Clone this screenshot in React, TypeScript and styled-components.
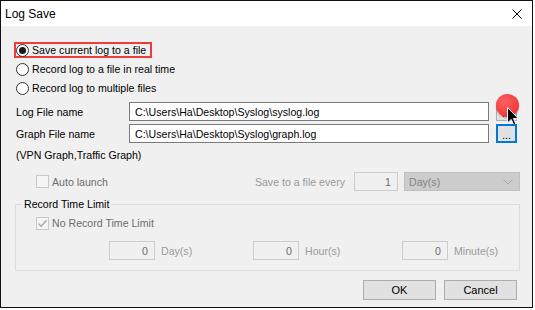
import styled, { createGlobalStyle } from 'styled-components'

const GlobalStyle = createGlobalStyle`
  body {
    margin: 0;
    background: #ffffff;
    font-family: "Liberation Sans", Arial, sans-serif;
  }
`

const Window = styled.div`
  width: 533px;
  height: 308px;
  box-sizing: border-box;
  border: 1px solid #111;
  display: flex;
  flex-direction: column;
  background: #f0f0f0;
`

const TitleBar = styled.div`
  height: 25px;
  background: #fff;
  display: flex;
  align-items: center;
  justify-content: space-between;
  padding: 0 10px 0 4px;
  font-size: 12px;
  color: #000;
`

const Body = styled.div`
  flex: 1;
  display: flex;
  flex-direction: column;
  padding: 16px 12px 6px 13px;
  font-size: 10.6px;
  color: #000;
`

const RadioList = styled.div`
  display: flex;
  flex-direction: column;
  align-items: flex-start;
  gap: 3px;
`

const RadioRow = styled.label<{ $highlight?: boolean }>`
  display: inline-flex;
  align-items: center;
  gap: 3px;
  height: 16px;
  box-sizing: border-box;
  padding-right: 4px;
  border: 2px solid ${p => (p.$highlight ? '#ee3b3b' : 'transparent')};
`

const RadioDot = styled.span<{ $checked?: boolean }>`
  width: 13px;
  height: 13px;
  box-sizing: border-box;
  border-radius: 50%;
  border: 1px solid #333;
  background: #fff;
  display: flex;
  align-items: center;
  justify-content: center;

  &::after {
    content: '';
    width: 7px;
    height: 7px;
    border-radius: 50%;
    background: ${p => (p.$checked ? '#1a1a1a' : 'transparent')};
  }
`

const FileRows = styled.div`
  margin-top: 6px;
  display: flex;
  flex-direction: column;
  gap: 3px;
  padding-left: 2px;
`

const FileRow = styled.div`
  display: flex;
  align-items: center;
  height: 19px;
`

const FieldLabel = styled.span`
  width: 113px;
  flex: none;
`

const TextBox = styled.div`
  width: 360px;
  height: 19px;
  box-sizing: border-box;
  border: 1px solid #7a7a7a;
  background: #fff;
  padding: 0 5px;
  display: flex;
  align-items: center;
  white-space: nowrap;
  overflow: hidden;
`

const BrowseWrap = styled.div`
  position: relative;
  width: 21px;
  height: 19px;
  margin-left: 7px;
`

const BrowseButton = styled.button<{ $focused?: boolean }>`
  width: 21px;
  height: 19px;
  box-sizing: border-box;
  padding: 0;
  font: inherit;
  font-size: 11px;
  line-height: 14px;
  background: #e1e1e1;
  border: 1px solid ${p => (p.$focused ? '#0078d7' : '#adadad')};
  box-shadow: ${p => (p.$focused ? 'inset 0 0 0 1px #0078d7' : 'none')};
  display: flex;
  align-items: flex-end;
  justify-content: center;
`

const Marker = styled.span`
  position: absolute;
  left: 0;
  top: -8px;
  width: 23px;
  height: 23px;
  border-radius: 50%;
  background: radial-gradient(circle at 40% 35%, #ff6262 0%, #f23d3d 60%, #e23232 100%);
  box-shadow: 0 1px 2px rgba(0, 0, 0, 0.25);
`

const Cursor = styled.svg`
  position: absolute;
  left: 11px;
  top: 5px;
  overflow: visible;
`

const Note = styled.div`
  margin-top: 4px;
  padding-left: 2px;
  line-height: 16px;
`

const OptionsRow = styled.div`
  margin-top: 9px;
  height: 19px;
  display: flex;
  align-items: center;
  justify-content: space-between;
`

const CheckRow = styled.label<{ $indent: number }>`
  display: inline-flex;
  align-items: center;
  gap: 3px;
  height: 16px;
  margin-left: ${p => p.$indent}px;
  color: #6d6d6d;
`

const CheckBox = styled.span`
  width: 13px;
  height: 13px;
  box-sizing: border-box;
  border: 1px solid #c8c8c8;
  background: #f5f5f5;
  display: flex;
  align-items: center;
  justify-content: center;
`

const EverySet = styled.div`
  display: flex;
  align-items: center;
`

const DimText = styled.span`
  color: #9a9a9a;
`

const NumBox = styled.div<{ $width: number }>`
  width: ${p => p.$width}px;
  height: 19px;
  box-sizing: border-box;
  border: 1px solid #cccccc;
  background: #f0f0f0;
  color: #6d6d6d;
  display: flex;
  align-items: center;
  justify-content: flex-end;
  padding-right: 6px;
`

const Combo = styled.div`
  width: 116px;
  height: 19px;
  box-sizing: border-box;
  margin-left: 6px;
  border: 1px solid #bfbfbf;
  background: #cccccc;
  color: #838383;
  display: flex;
  align-items: center;
  justify-content: space-between;
  padding: 0 6px 0 4px;
`

const Group = styled.fieldset`
  margin: 6px 0 0 1px;
  padding: 0 0 10px 6px;
  border: 1px solid #dcdcdc;
  min-width: 0;
`

const Legend = styled.legend`
  padding: 0 2px;
  line-height: 14px;
  color: #000;
`

const TimeRow = styled.div`
  margin-top: 10px;
  display: grid;
  grid-template-columns: 144px 149px auto;
  padding-left: 87px;
`

const TimeCell = styled.div`
  display: flex;
  align-items: center;
  gap: 6px;
`

const Actions = styled.div`
  margin-top: 9px;
  margin-right: 3px;
  display: flex;
  justify-content: flex-end;
  gap: 8px;
`

const DialogButton = styled.button`
  width: 73px;
  height: 20px;
  box-sizing: border-box;
  padding: 0;
  font: inherit;
  font-size: 11px;
  color: #000;
  background: #e1e1e1;
  border: 1px solid #adadad;
`

const Check = () => (
  <svg width="11" height="11" viewBox="0 0 11 11">
    <polyline points="1.5,5.5 4.2,8.2 9.5,2.2" fill="none" stroke="#a6a6a6" strokeWidth="1.3" />
  </svg>
)

export default function App() {
  return (
    <>
      <GlobalStyle />
      <Window>
        <TitleBar>
          <span>Log Save</span>
          <svg width="10" height="10" viewBox="0 0 10 10">
            <path d="M0.5 0.5 L9.5 9.5 M9.5 0.5 L0.5 9.5" stroke="#000" strokeWidth="1" />
          </svg>
        </TitleBar>
        <Body>
          <RadioList>
            <RadioRow $highlight>
              <RadioDot $checked />
              Save current log to a file
            </RadioRow>
            <RadioRow>
              <RadioDot />
              Record log to a file in real time
            </RadioRow>
            <RadioRow>
              <RadioDot />
              Record log to multiple files
            </RadioRow>
          </RadioList>

          <FileRows>
            <FileRow>
              <FieldLabel>Log File name</FieldLabel>
              <TextBox>C:\Users\Ha\Desktop\Syslog\syslog.log</TextBox>
              <BrowseWrap>
                <BrowseButton>...</BrowseButton>
                <Marker />
                <Cursor width="12" height="19" viewBox="0 0 12 19">
                  <path
                    d="M0.5 0.5 L0.5 16 L4.2 12.4 L6.8 18.3 L9 17.3 L6.5 11.6 L11.4 11.6 Z"
                    fill="#000"
                    stroke="#fff"
                    strokeWidth="1"
                    strokeLinejoin="round"
                  />
                </Cursor>
              </BrowseWrap>
            </FileRow>
            <FileRow>
              <FieldLabel>Graph File name</FieldLabel>
              <TextBox>C:\Users\Ha\Desktop\Syslog\graph.log</TextBox>
              <BrowseWrap>
                <BrowseButton $focused>...</BrowseButton>
              </BrowseWrap>
            </FileRow>
          </FileRows>
          <Note>(VPN Graph,Traffic Graph)</Note>

          <OptionsRow>
            <CheckRow $indent={22}>
              <CheckBox />
              Auto launch
            </CheckRow>
            <EverySet>
              <DimText>Save to a file every</DimText>
              <NumBox $width={44} style={{ marginLeft: 9 }}>1</NumBox>
              <Combo>
                <span>Day(s)</span>
                <svg width="10" height="6" viewBox="0 0 10 6">
                  <polyline points="0.5,0.5 5,5 9.5,0.5" fill="none" stroke="#a9a9a9" strokeWidth="1" />
                </svg>
              </Combo>
            </EverySet>
          </OptionsRow>

          <Group>
            <Legend>Record Time Limit</Legend>
            <CheckRow $indent={14} style={{ marginTop: 4 }}>
              <CheckBox>
                <Check />
              </CheckBox>
              No Record Time Limit
            </CheckRow>
            <TimeRow>
              <TimeCell>
                <NumBox $width={46}>0</NumBox>
                <DimText>Day(s)</DimText>
              </TimeCell>
              <TimeCell>
                <NumBox $width={46}>0</NumBox>
                <DimText>Hour(s)</DimText>
              </TimeCell>
              <TimeCell>
                <NumBox $width={46}>0</NumBox>
                <DimText>Minute(s)</DimText>
              </TimeCell>
            </TimeRow>
          </Group>

          <Actions>
            <DialogButton>OK</DialogButton>
            <DialogButton>Cancel</DialogButton>
          </Actions>
        </Body>
      </Window>
    </>
  )
}
